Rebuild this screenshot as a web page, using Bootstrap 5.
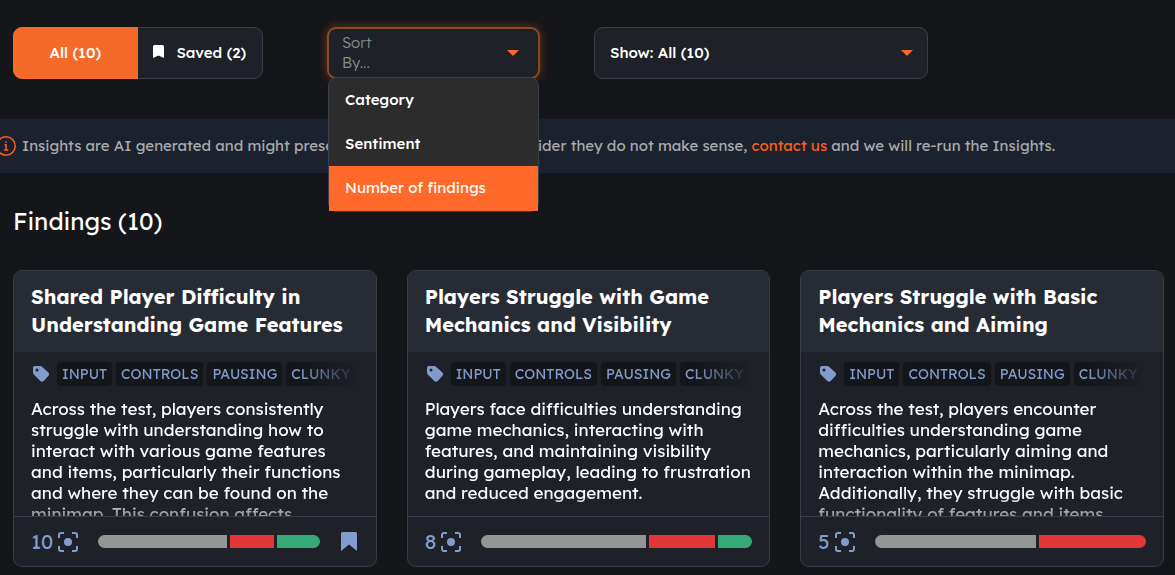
<!DOCTYPE html>
<html lang="en" data-bs-theme="dark">
<head>
<meta charset="utf-8">
<meta name="viewport" content="width=device-width, initial-scale=1">
<title>Findings</title>
<link href="https://cdn.jsdelivr.net/npm/bootstrap@5.3.0/dist/css/bootstrap.min.css" rel="stylesheet">
<style>
  :root { --page: #151619; --panel: #1e2128; --line: #383e4a; --accent: #f56a28; --soft: #829cce; }
  body { background: var(--page); color: #fff; font-family: Lexend, "Lexend Deca", Inter, sans-serif; font-size: 15px; overflow-x: hidden; }
  .page-pad { padding-left: 13px; padding-right: 11px; }

  /* toolbar */
  .toolbar { padding-top: 27px; margin-bottom: 40px; }
  .control { height: 52px; background-color: var(--panel); border: 1px solid var(--line); border-radius: 9px; color: #fff; font-size: 15px; font-weight: 500; }
  .filter-group { width: 250px; }
  .filter-group .btn { flex: 1 1 0; padding: 0; font-size: 15px; font-weight: 500; color: #fff; background: transparent; border: 0; border-radius: 0; }
  .filter-group .btn.active { background: var(--accent); border-radius: 9px 0 0 9px; margin: -1px 0 -1px -1px; color: #fff; }
  .sort-box { width: 213px; margin-left: 64px; }
  .sort-toggle { padding: 0 19px 0 13px; line-height: 20px; color: #8b8d91; font-weight: 300; outline: 0; border-color: #8a4a26; border-width: 2px; box-shadow: 0 0 10px rgba(245, 106, 40, .4); }
  .sort-menu { top: 50px; left: 1px; width: 211px; min-width: 0; margin: 0; padding: 0; background: #2c2c2c; border: 1px solid var(--line); border-radius: 9px; }
  .sort-menu .dropdown-item { height: 44px; padding: 0 16px; font-size: 15px; font-weight: 500; color: #fff; }
  .sort-menu .dropdown-item.active { height: 45px; background: #ff6929; font-weight: 400; }
  .show-box { width: 29%; margin-left: 54px; }
  .show-select { padding: 0 44px 0 15px; box-shadow: none;
    background-image: url("data:image/svg+xml,%3csvg xmlns='http://www.w3.org/2000/svg' viewBox='0 0 12 6'%3e%3cpath fill='%23f56a28' d='M0 0h12L6 6z'/%3e%3c/svg%3e");
    background-repeat: no-repeat; background-size: 12px 6px; background-position: right 14px center; }

  /* notice */
  .notice { height: 54px; background: #1c222d; color: #a9abaf; white-space: nowrap; overflow: hidden; }
  .notice svg { margin-left: -4px; margin-right: 6px; }
  .notice a { color: #ff5f20; text-decoration: none; }
  .section-title { font-size: 24px; font-weight: 400; line-height: 30px; margin: 33px 0 34px; }

  /* finding cards */
  .findings { --bs-gutter-x: 30px; --bs-gutter-y: 30px; }
  .finding { background: var(--panel); border: 1px solid var(--line); border-radius: 9px; overflow: hidden; }
  .finding .card-header { background: #272b33; padding: 12px 17px 13px; border: 0; }
  .finding h2 { font-size: 20px; font-weight: 700; line-height: 28px; }
  .finding .card-body { padding: 10px 17px 0; }
  .tag-strip { gap: 4px; overflow: hidden; color: var(--soft); -webkit-mask-image: linear-gradient(90deg, #000 82%, transparent); mask-image: linear-gradient(90deg, #000 82%, transparent); }
  .tag-strip svg { margin: 0 3px 0 1px; }
  .tag { height: 24px; padding: 0 5px; border-radius: 4px; background: var(--page); font-size: 14px; font-weight: 400; line-height: 24px; }
  .excerpt { height: 118px; margin-top: 12px; overflow: hidden; font-size: 17px; font-weight: 400; line-height: 21px; -webkit-mask-image: linear-gradient(#000 82%, rgba(0, 0, 0, .5)); mask-image: linear-gradient(#000 82%, rgba(0, 0, 0, .5)); }
  .finding .card-footer { height: 50px; background: transparent; border-top: 1px solid var(--line); padding: 0 17px; color: var(--soft); font-size: 20px; }
  .focus-mark { margin-left: 5px; }
  .meter { --bs-progress-height: 13px; gap: 3px; border-radius: 7px; background: none; overflow: hidden; margin-left: 20px; }
  .seg-neutral { background: #959595; } .seg-negative { background: #e33636; } .seg-positive { background: #35a978; }
  .save-btn { padding: 0; margin-left: 21px; margin-right: 2px; border: 0; color: var(--soft); line-height: 1; }
</style>
</head>
<body>
<svg class="d-none" aria-hidden="true">
  <symbol id="tag" viewBox="0 0 18 18"><path fill-rule="evenodd" fill="currentColor" d="M3 1h5c1 0 1.700.300 2.300.900l6 5.700c1.100 1 1.100 2.300 0 3.400l-4.600 5c-1 1.100-2.300 1.100-3.400 0L2 9.700C1.300 9 1 8.300 1 7.500V3c0-1.200.800-2 2-2zm2 2.600a1.500 1.500 0 1 0 0 3 1.500 1.500 0 0 0 0-3z"/></symbol>
  <symbol id="focus" viewBox="0 0 20 20"><path fill="none" stroke="currentColor" stroke-width="2" d="M1 6V3a2 2 0 0 1 2-2h3M14 1h3a2 2 0 0 1 2 2v3M19 14v3a2 2 0 0 1-2 2h-3M6 19H3a2 2 0 0 1-2-2v-3"/><circle cx="10" cy="10" r="4" fill="currentColor"/></symbol>
  <symbol id="bookmark" viewBox="0 0 16 19"><path fill="currentColor" d="M1.500 0h13Q16 0 16 1.500V19l-8-6.500L0 19V1.500Q0 0 1.500 0z"/></symbol>
  <symbol id="bookmark-sm" viewBox="0 0 11 13"><path fill="currentColor" d="M1.500 0h8Q11 0 11 1.500V13L5.500 10.500 0 13V1.500Q0 0 1.500 0z"/></symbol>
</svg>

<div class="toolbar page-pad d-flex align-items-start">
  <div class="filter-group control d-flex flex-shrink-0" role="group" aria-label="Filter findings">
    <button type="button" class="btn active">All (10)</button>
    <button type="button" class="btn d-flex align-items-center justify-content-center"><svg class="me-2 mb-1" width="11" height="13"><use href="#bookmark-sm"/></svg><span class="ms-1">Saved (2)</span></button>
  </div>
  <div class="sort-box dropdown flex-shrink-0">
    <button type="button" class="sort-toggle control w-100 d-flex align-items-center justify-content-between text-start" aria-expanded="true">
      <span>Sort<br>By...</span>
      <svg width="12" height="6" viewBox="0 0 12 6"><path fill="#ff6929" d="M0 0h12L6 6z"/></svg>
    </button>
    <ul class="sort-menu dropdown-menu show">
      <li><button type="button" class="dropdown-item">Category</button></li>
      <li><button type="button" class="dropdown-item">Sentiment</button></li>
      <li><button type="button" class="dropdown-item active">Number of findings</button></li>
    </ul>
  </div>
  <div class="show-box">
    <select class="show-select form-select control" aria-label="Show"><option>Show: All (10)</option></select>
  </div>
</div>

<div class="notice d-flex align-items-center">
  <svg class="flex-shrink-0" width="20" height="20" viewBox="0 0 20 20" fill="none" stroke="#ff5f20"><circle cx="10" cy="10" r="9.200" stroke-width="1.500"/><path stroke-width="1.500" d="M8.500 8.700H10V14M8 14h4.200"/><circle cx="10" cy="6" r=".5"/></svg>
  <span>Insights are AI generated and might present any mistakes. If you consider they do not make sense, <a href="#">contact us</a> and we will re-run the Insights.</span>
</div>

<main class="page-pad">
  <h1 class="section-title">Findings (10)</h1>
  <div class="row row-cols-3 findings">
    <div class="col">
      <article class="card finding">
        <div class="card-header"><h2 class="mb-0">Shared Player Difficulty in Understanding Game Features</h2></div>
        <div class="card-body">
          <div class="tag-strip d-flex align-items-center"><svg class="flex-shrink-0" width="18" height="18"><use href="#tag"/></svg><span class="tag">INPUT</span><span class="tag">CONTROLS</span><span class="tag">PAUSING</span><span class="tag">CLUNKY</span></div>
          <p class="excerpt mb-0">Across the test, players consistently struggle with understanding how to interact with various game features and items, particularly their functions and where they can be found on the minimap. This confusion affects</p>
        </div>
        <div class="card-footer d-flex align-items-center"><span>10</span><svg class="focus-mark flex-shrink-0" width="20" height="20"><use href="#focus"/></svg>
          <div class="meter progress flex-grow-1"><div class="progress-bar seg-neutral" style="width:60%"></div><div class="progress-bar seg-negative" style="width:20%"></div><div class="progress-bar seg-positive" style="width:20%"></div></div>
          <button type="button" class="btn save-btn" aria-label="Saved"><svg width="16" height="19"><use href="#bookmark"/></svg></button>
        </div>
      </article>
    </div>
    <div class="col">
      <article class="card finding">
        <div class="card-header"><h2 class="mb-0">Players Struggle with Game Mechanics and Visibility</h2></div>
        <div class="card-body">
          <div class="tag-strip d-flex align-items-center"><svg class="flex-shrink-0" width="18" height="18"><use href="#tag"/></svg><span class="tag">INPUT</span><span class="tag">CONTROLS</span><span class="tag">PAUSING</span><span class="tag">CLUNKY</span></div>
          <p class="excerpt mb-0">Players face difficulties understanding game mechanics, interacting with features, and maintaining visibility during gameplay, leading to frustration and reduced engagement.</p>
        </div>
        <div class="card-footer d-flex align-items-center"><span>8</span><svg class="focus-mark flex-shrink-0" width="20" height="20"><use href="#focus"/></svg>
          <div class="meter progress flex-grow-1"><div class="progress-bar seg-neutral" style="width:62%"></div><div class="progress-bar seg-negative" style="width:25%"></div><div class="progress-bar seg-positive" style="width:13%"></div></div>
        </div>
      </article>
    </div>
    <div class="col">
      <article class="card finding">
        <div class="card-header"><h2 class="mb-0">Players Struggle with Basic Mechanics and Aiming</h2></div>
        <div class="card-body">
          <div class="tag-strip d-flex align-items-center"><svg class="flex-shrink-0" width="18" height="18"><use href="#tag"/></svg><span class="tag">INPUT</span><span class="tag">CONTROLS</span><span class="tag">PAUSING</span><span class="tag">CLUNKY</span></div>
          <p class="excerpt mb-0">Across the test, players encounter difficulties understanding game mechanics, particularly aiming and interaction within the minimap. Additionally, they struggle with basic functionality of features and items</p>
        </div>
        <div class="card-footer d-flex align-items-center"><span>5</span><svg class="focus-mark flex-shrink-0" width="20" height="20"><use href="#focus"/></svg>
          <div class="meter progress flex-grow-1"><div class="progress-bar seg-neutral" style="width:60%"></div><div class="progress-bar seg-negative" style="width:40%"></div></div>
        </div>
      </article>
    </div>
  </div>
</main>
<script src="https://cdn.jsdelivr.net/npm/bootstrap@5.3.0/dist/js/bootstrap.bundle.min.js"></script>
</body>
</html>
